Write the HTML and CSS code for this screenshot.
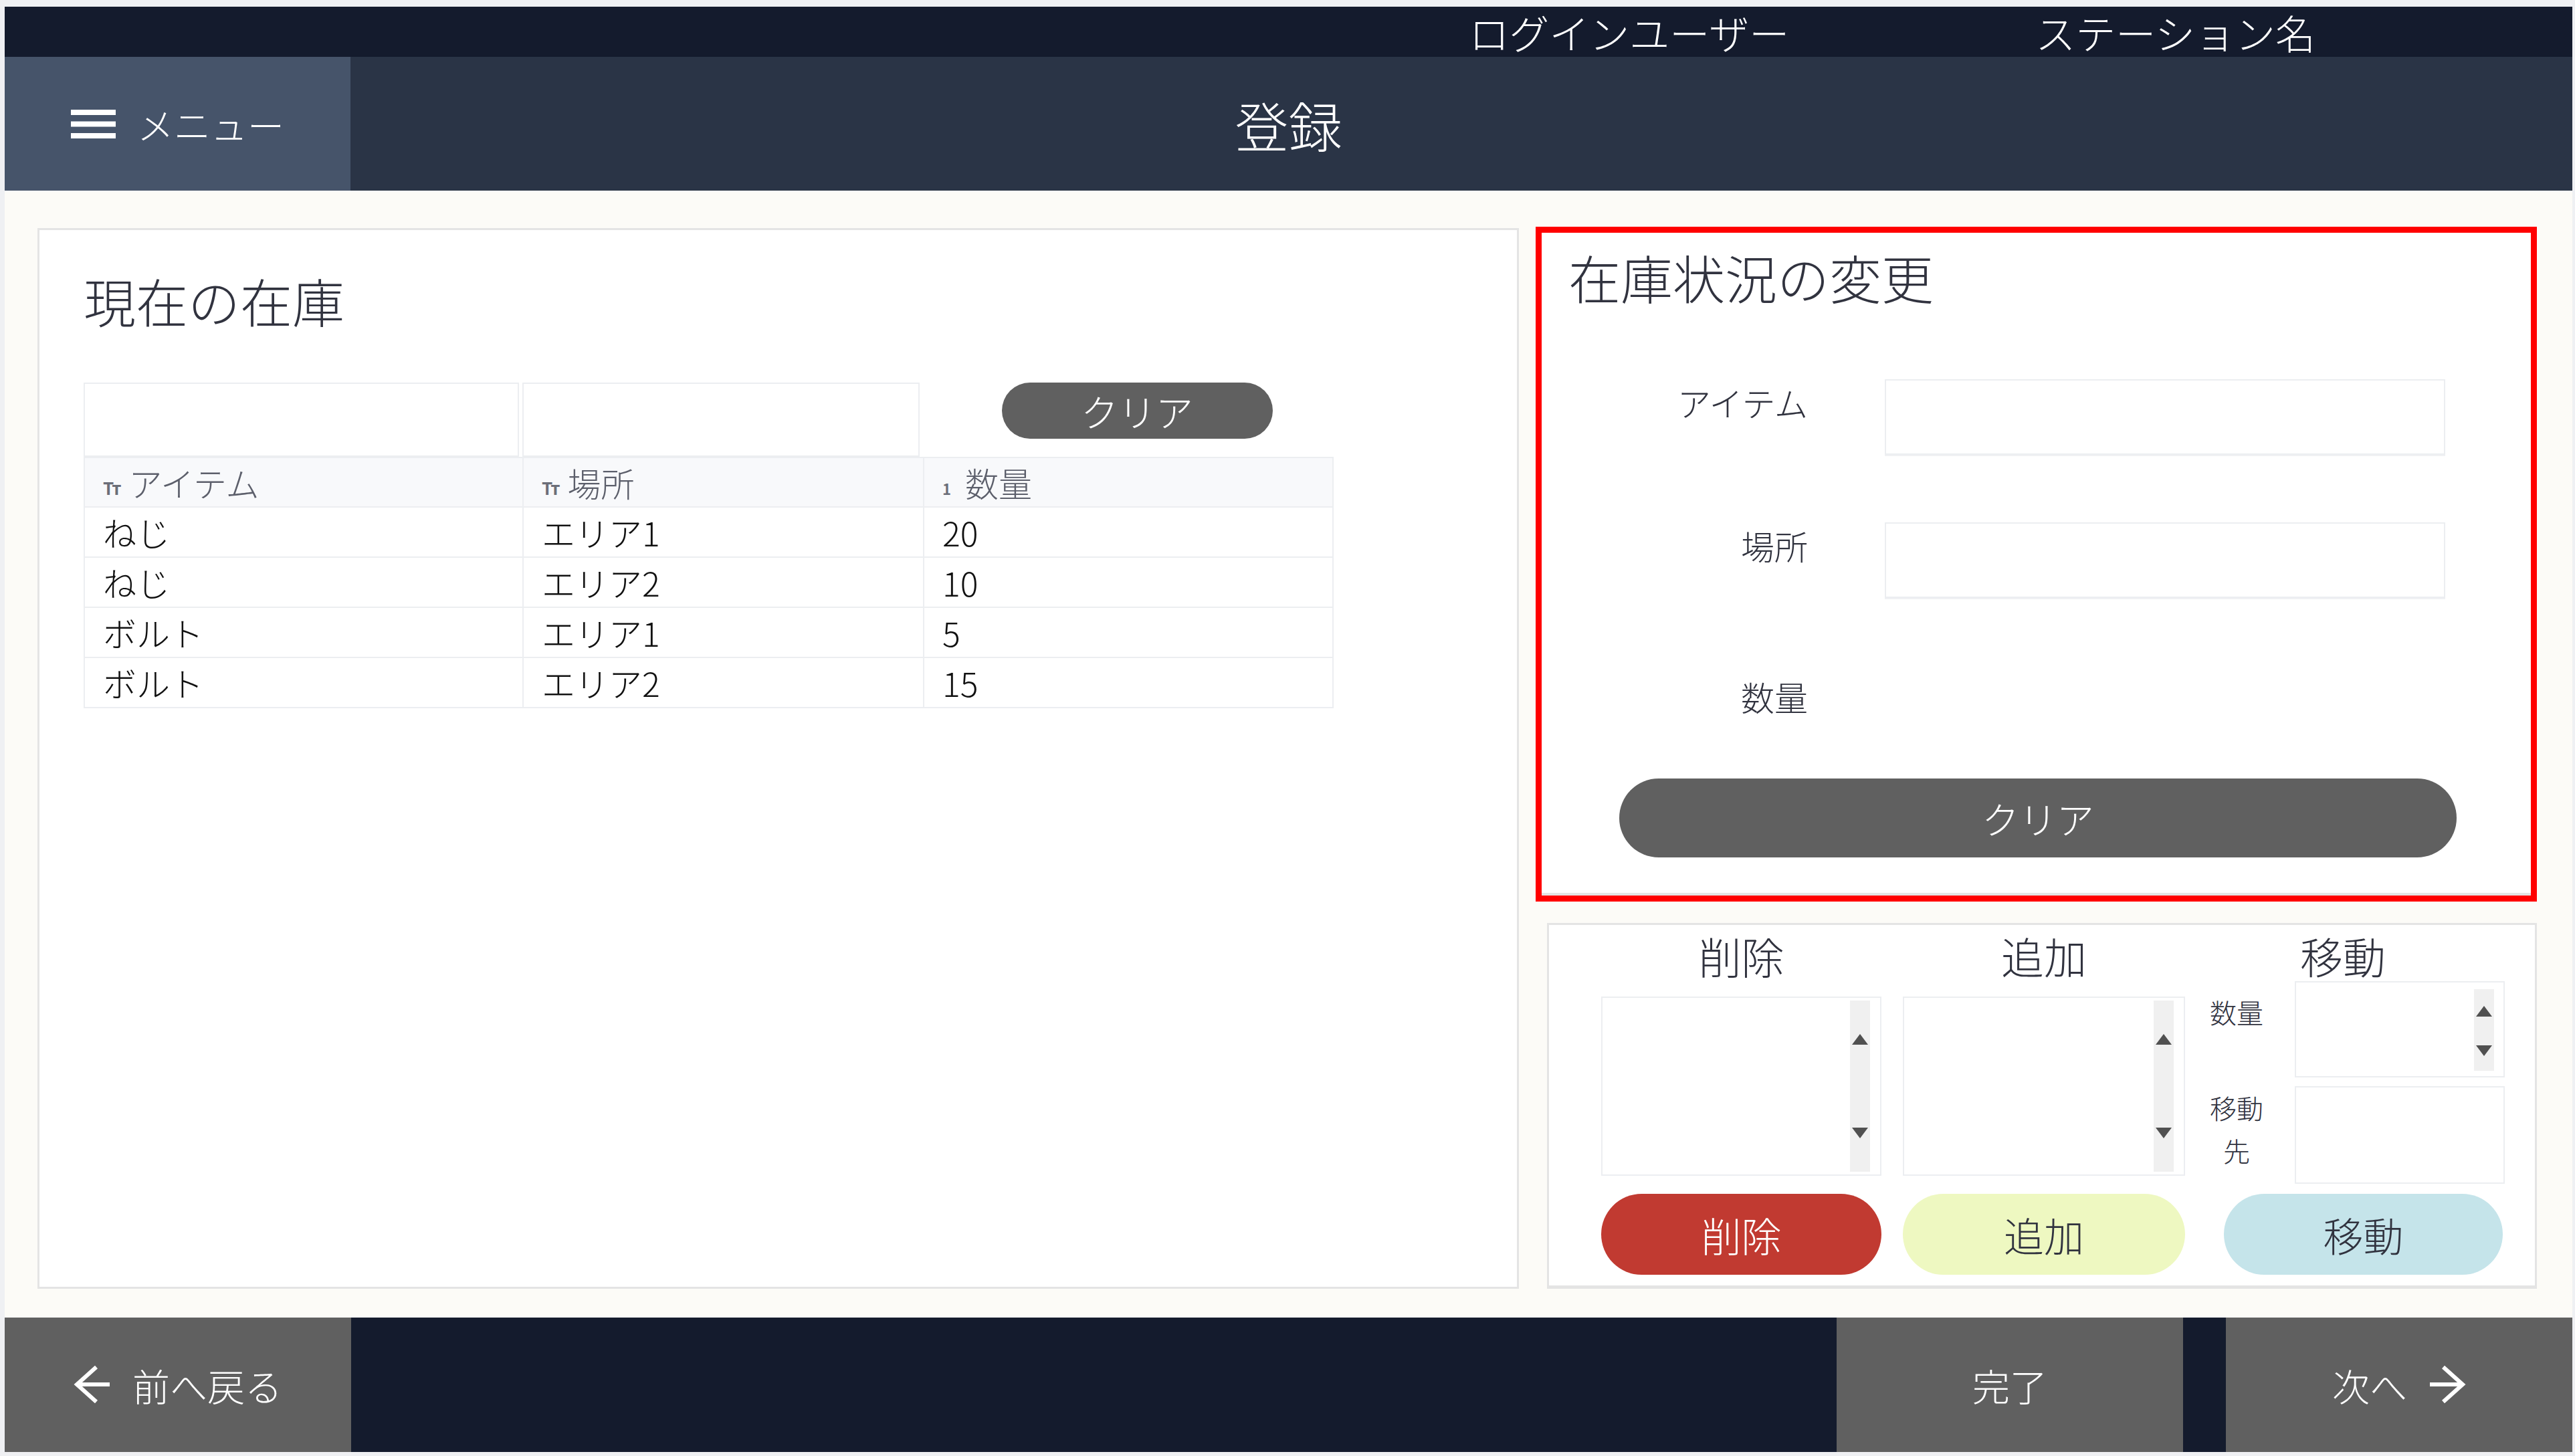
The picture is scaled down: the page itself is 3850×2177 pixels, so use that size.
FILE: index.html
```html
<!DOCTYPE html>
<html lang="ja">
<head>
    <meta charset="utf-8">
    <title>登録</title>
    <link rel="stylesheet" href="styles.css">
</head>
<body>
<div class="app">
    <div class="topbar">
        <span>ログインユーザー</span>
        <span>ステーション名</span>
    </div>

    <div class="navbar">
        <button class="menu-btn">
            <svg class="menu-icon" viewBox="0 0 67 43"><rect y="0" width="67" height="8"/><rect y="17.5" width="67" height="8"/><rect y="35" width="67" height="8"/></svg>
            <span>メニュー</span>
        </button>
        <h1 class="page-title">登録</h1>
    </div>

    <div class="content">
        <!-- left: current stock -->
        <div class="card stock-card">
            <h2 class="card-title">現在の在庫</h2>
            <div class="filter-row">
                <div class="filter-box"></div>
                <div class="filter-box"></div>
                <div class="filter-cell"><button class="pill clear-small">クリア</button></div>
            </div>
            <table class="stock-table">
                <tr>
                    <th><span class="type-icon">Tт</span>アイテム</th>
                    <th><span class="type-icon">Tт</span>場所</th>
                    <th><span class="type-icon num">1</span>数量</th>
                </tr>
                <tr><td>ねじ</td><td>エリア1</td><td>20</td></tr>
                <tr><td>ねじ</td><td>エリア2</td><td>10</td></tr>
                <tr><td>ボルト</td><td>エリア1</td><td>5</td></tr>
                <tr><td>ボルト</td><td>エリア2</td><td>15</td></tr>
            </table>
        </div>

        <!-- right: change form + actions -->
        <div class="right-col">
            <div class="highlight">
                <div class="change-card">
                    <h2 class="card-title">在庫状況の変更</h2>
                    <div class="change-form">
                        <label>アイテム</label>
                        <div class="text-box"></div>
                        <label>場所</label>
                        <div class="text-box"></div>
                        <label class="qty-label">数量</label>
                        <div></div>
                    </div>
                    <button class="pill clear-wide">クリア</button>
                </div>
            </div>

            <div class="card action-card">
                <div class="action-head">削除</div>
                <div class="action-head">追加</div>
                <div class="action-head move-head">移動</div>

                <div class="list-box">
                    <div class="scroll-track"><i class="arrow-up"></i><i class="arrow-down"></i></div>
                </div>
                <div class="list-box">
                    <div class="scroll-track"><i class="arrow-up"></i><i class="arrow-down"></i></div>
                </div>
                <div class="move-fields">
                    <label class="move-label">数量</label>
                    <div class="num-box">
                        <div class="spin-track"><i class="arrow-up"></i><i class="arrow-down"></i></div>
                    </div>
                    <label class="move-label dest-label">移動先</label>
                    <div class="dest-box"></div>
                </div>

                <button class="pill btn-delete">削除</button>
                <button class="pill btn-add">追加</button>
                <button class="pill btn-move">移動</button>
            </div>
        </div>
    </div>

    <div class="footer">
        <button class="nav-btn">
            <svg class="arrow-icon" viewBox="0 0 56 56"><path d="M54 28H5M34 2L5 28L34 54"/></svg>
            <span>前へ戻る</span>
        </button>
        <button class="nav-btn done-btn">完了</button>
        <button class="nav-btn next-btn">
            <span>次へ</span>
            <svg class="arrow-icon" viewBox="0 0 56 56"><path d="M2 28H51M22 2L51 28L22 54"/></svg>
        </button>
    </div>
</div>
</body>
</html>
```

FILE: styles.css
```css
html, body {
    height: 100%;
}

body {
    margin: 0;
    padding: 10px 4px 8px 7px;
    box-sizing: border-box;
    background-color: #eff0f3;
    font-family: "Noto Sans CJK JP", "Noto Sans", sans-serif;
    font-weight: 300;
    color: #31333f;
}

.app {
    height: 100%;
    display: flex;
    flex-direction: column;
}

/* header */
.topbar {
    height: 75px;
    flex-shrink: 0;
    background-color: #141b2d;
    color: #ffffff;
    display: flex;
    justify-content: flex-end;
    gap: 368px;
    padding-right: 384px;
    font-size: 60px;
    line-height: 75px;
}

.navbar {
    height: 200px;
    flex-shrink: 0;
    background-color: #2a3446;
    display: grid;
    grid-template-columns: 517px 1fr 517px;
    align-items: center;
}

.menu-btn {
    height: 100%;
    padding: 0;
    border: none;
    background-color: #46546a;
    color: #ffffff;
    font-family: inherit;
    font-weight: inherit;
    font-size: 55px;
    display: flex;
    align-items: center;
    justify-content: center;
    gap: 32px;
}

.menu-icon {
    width: 67px;
    height: 43px;
    fill: #ffffff;
}

.page-title {
    margin: 0;
    text-align: center;
    color: #ffffff;
    font-size: 80px;
    font-weight: 300;
}

/* main area */
.content {
    flex: 1;
    background-color: #fcfbf7;
    display: grid;
    grid-template-columns: 2215px 1497px;
    column-gap: 25px;
    padding: 54px 53px 43px 49px;
}

.card {
    background-color: #ffffff;
    border: 3px solid #e4e4e4;
    box-sizing: border-box;
}

.card-title {
    margin: 0;
    font-size: 78px;
    font-weight: 300;
    line-height: 1.2;
    color: #31333f;
}

.stock-card {
    margin-top: 2px;
    padding: 59px 0 0 66px;
}

.filter-row {
    margin-top: 75px;
    display: grid;
    grid-template-columns: 656px 599px 614px;
    height: 111px;
}

.filter-box {
    border: 2px solid #eceef1;
    margin-right: 5px;
}

.filter-cell {
    display: flex;
    justify-content: center;
    align-items: flex-start;
}

.pill {
    border: none;
    border-radius: 999px;
    font-family: inherit;
    font-weight: inherit;
    padding: 0;
    cursor: pointer;
}

.clear-small {
    width: 405px;
    height: 84px;
    margin-left: 26px;
    background-color: #606060;
    color: #ffffff;
    font-size: 56px;
}

.stock-table {
    width: 1869px;
    table-layout: fixed;
    border-collapse: collapse;
    font-size: 50px;
}

.stock-table th,
.stock-table td {
    box-sizing: border-box;
    border: 2px solid #eceef1;
    padding: 0 27px;
    text-align: left;
    font-weight: 300;
    white-space: nowrap;
}

.stock-table th:nth-child(1) { width: 656px; }
.stock-table th:nth-child(2) { width: 599px; }

.stock-table th {
    height: 71px;
    background-color: #f8f9fb;
    color: #5c5f6b;
}

.stock-table td {
    height: 75px;
    color: #111111;
}

.type-icon {
    display: inline-block;
    font-size: 26px;
    font-weight: bold;
    letter-spacing: -3px;
    margin-right: 14px;
    vertical-align: 3px;
    color: #6b6e78;
}

.type-icon.num {
    font-size: 22px;
    margin-right: 24px;
}

/* right column */
.right-col {
    display: flex;
    flex-direction: column;
    gap: 32px;
}

.highlight {
    border: 9px solid #ff0000;
}

.change-card {
    background-color: #ffffff;
    border-bottom: 4px solid #e3e3e3;
    padding: 20px 0 53px 0;
}

.change-card .card-title {
    margin-left: 40px;
}

.change-form {
    margin-top: 105px;
    display: grid;
    grid-template-columns: 398px 838px;
    grid-template-rows: 113px 113px 80px;
    column-gap: 115px;
    row-gap: 101px;
}

.change-form label {
    text-align: right;
    font-size: 50px;
    line-height: 60px;
    padding-top: 4px;
}

.change-form .qty-label {
    padding-top: 16px;
}

.text-box {
    border: 2px solid #eceef1;
    box-shadow: 0 2px 0 #f0f1f3;
}

.clear-wide {
    display: block;
    margin: 89px 0 0 116px;
    width: 1252px;
    height: 118px;
    background-color: #606060;
    color: #ffffff;
    font-size: 56px;
}

/* delete / add / move */
.action-card {
    margin-left: 17px;
    padding: 7px 44px 16px 78px;
    border-bottom-width: 5px;
    display: grid;
    grid-template-columns: 419px 422px 446px;
    grid-template-rows: 77px 318px 121px;
    column-gap: 32px;
}

.action-head {
    text-align: center;
    font-size: 64px;
    line-height: 77px;
}

.move-head {
    padding-right: 38px;
}

.list-box {
    margin-top: 23px;
    height: 268px;
    box-sizing: border-box;
    border: 2px solid #eceef1;
    display: flex;
    justify-content: flex-end;
    padding: 4px 15px 4px 0;
}

.scroll-track {
    width: 30px;
    background-color: #f0f0f0;
    display: flex;
    flex-direction: column;
    justify-content: space-between;
    align-items: center;
    padding: 50px 0 50px;
}

.arrow-up {
    width: 0;
    height: 0;
    border-left: 12px solid transparent;
    border-right: 12px solid transparent;
    border-bottom: 16px solid #505050;
}

.arrow-down {
    width: 0;
    height: 0;
    border-left: 12px solid transparent;
    border-right: 12px solid transparent;
    border-top: 16px solid #505050;
}

.move-fields {
    display: grid;
    grid-template-columns: 90px 314px;
    grid-template-rows: 144px 146px;
    column-gap: 42px;
    row-gap: 13px;
}

.move-label {
    text-align: center;
    font-size: 40px;
    line-height: 56px;
    padding-top: 18px;
}

.move-label.dest-label {
    padding-top: 0;
    line-height: 64px;
}

.num-box {
    border: 2px solid #eceef1;
    display: flex;
    justify-content: flex-end;
    padding: 10px 14px 8px 0;
}

.spin-track {
    width: 30px;
    background-color: #f0f0f0;
    display: flex;
    flex-direction: column;
    justify-content: space-between;
    align-items: center;
    padding: 25px 0 22px;
}

.dest-box {
    border: 2px solid #eceef1;
}

.btn-delete,
.btn-add,
.btn-move {
    height: 121px;
    font-size: 60px;
}

.btn-delete {
    background-color: #c13a31;
    color: #ffffff;
}

.btn-add {
    background-color: #eef8c1;
    color: #31333f;
}

.btn-move {
    margin-left: 26px;
    width: 417px;
    background-color: #c5e4ea;
    color: #31333f;
}

/* footer */
.footer {
    height: 201px;
    flex-shrink: 0;
    background-color: #141b2d;
    display: flex;
}

.nav-btn {
    width: 518px;
    height: 100%;
    padding: 0;
    border: none;
    background-color: #606060;
    color: #ffffff;
    font-family: inherit;
    font-weight: inherit;
    font-size: 56px;
    display: flex;
    align-items: center;
    justify-content: center;
    gap: 32px;
}

.done-btn {
    margin-left: auto;
}

.next-btn {
    margin-left: 64px;
}

.arrow-icon {
    width: 56px;
    height: 56px;
    fill: none;
    stroke: #ffffff;
    stroke-width: 6;
}
```
